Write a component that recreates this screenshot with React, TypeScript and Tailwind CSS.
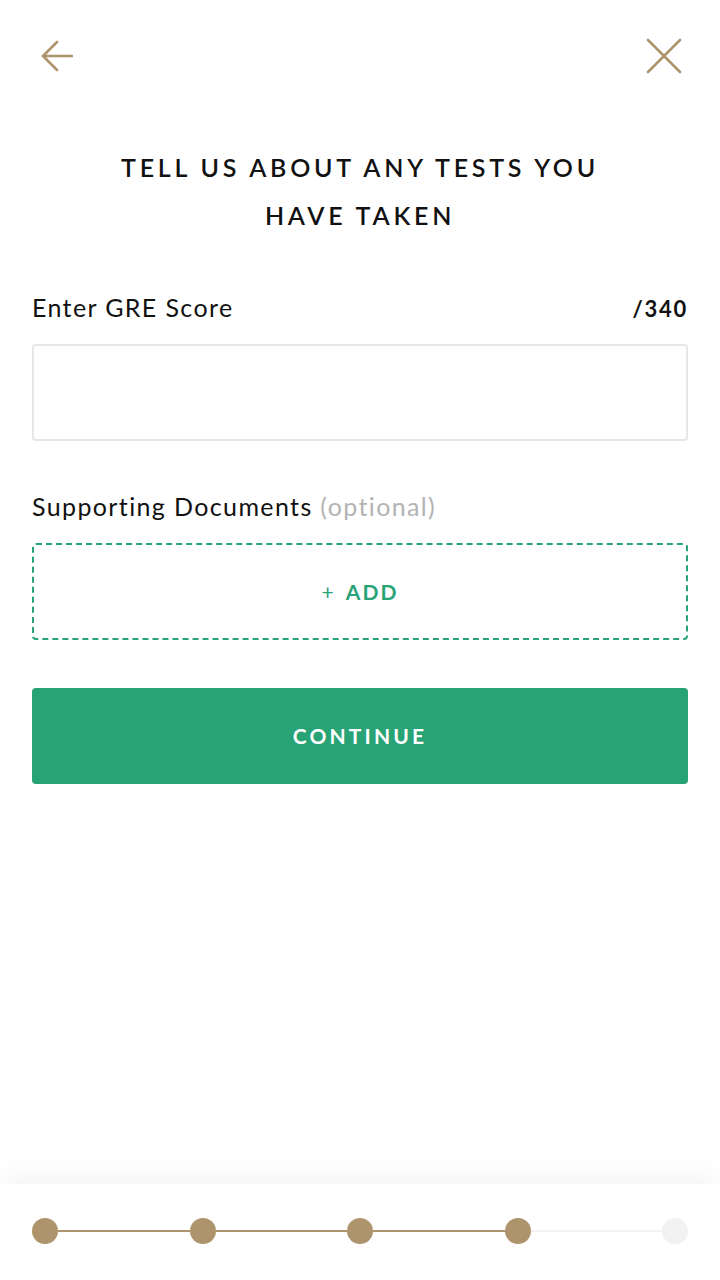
const steps = [true, true, true, true, false];

const Stepper = () => {
  return (
    <div className="flex items-center px-8">
      {steps.map((done, i) => (
        <div key={i} className="flex flex-1 items-center last:flex-none">
          <span
            className={`h-[26px] w-[26px] shrink-0 rounded-full ${done ? 'bg-[#ae946c]' : 'bg-[#f2f2f2]'}`}
          />
          {i < steps.length - 1 && (
            <span
              className={`h-[2px] flex-1 ${steps[i + 1] ? 'bg-[#ae946c]' : 'bg-[#f2f2f2]'}`}
            />
          )}
        </div>
      ))}
    </div>
  );
};

const App = () => {
  return (
    <div className="flex h-[1280px] w-[720px] flex-col bg-white font-['Lato',sans-serif] text-[#111]">
      <header className="flex h-[112px] items-center justify-between pl-[41px] pr-[38px]">
        <button type="button" aria-label="Back">
          <svg width="32" height="34" viewBox="0 0 32 34" fill="none">
            <path
              d="M31 17H2M16 3L2 17l14 14"
              stroke="#ae946c"
              strokeWidth="2.6"
              strokeLinecap="round"
              strokeLinejoin="round"
            />
          </svg>
        </button>
        <button type="button" aria-label="Close">
          <svg width="36" height="36" viewBox="0 0 36 36" fill="none">
            <path
              d="M2 2l32 32M34 2L2 34"
              stroke="#ae946c"
              strokeWidth="2.6"
              strokeLinecap="round"
            />
          </svg>
        </button>
      </header>

      <h1 className="mt-[31px] px-10 text-center text-[25px] font-semibold leading-[48px] tracking-[0.15em]">
        TELL US ABOUT ANY TESTS YOU
        <br />
        HAVE TAKEN
      </h1>

      <main className="flex flex-col px-8 pt-[51px]">
        <div className="flex h-[34px] items-baseline justify-between">
          <label className="text-[25px] leading-[34px] tracking-[0.055em]">Enter GRE Score</label>
          <span className="text-[22px] font-bold tracking-[0.08em]">/340</span>
        </div>
        <input
          type="text"
          className="mt-[20px] h-[97px] w-full rounded-[4px] border-2 border-[#e6e6e6] px-4 text-2xl outline-none"
        />

        <p className="mt-[48px] text-[25px] leading-[34px] tracking-[0.055em]">
          Supporting Documents <span className="text-[#b3b3b3]">(optional)</span>
        </p>
        <button
          type="button"
          className="mt-[20px] flex h-[97px] items-center justify-center rounded-[4px] border-2 border-dashed border-[#28a376] text-[21px] font-bold tracking-[0.1em] text-[#28a376]"
        >
          <span className="mr-[10px] font-normal">+</span>ADD
        </button>

        <button
          type="button"
          className="mt-[48px] flex h-[96px] items-center justify-center rounded-[4px] bg-[#28a376] text-[21px] font-bold tracking-[0.15em] text-white"
        >
          CONTINUE
        </button>
      </main>

      <footer className="mt-auto h-[96px] pt-[34px] shadow-[0_-10px_24px_rgba(0,0,0,0.04)]">
        <Stepper />
      </footer>
    </div>
  );
};

export default App;
